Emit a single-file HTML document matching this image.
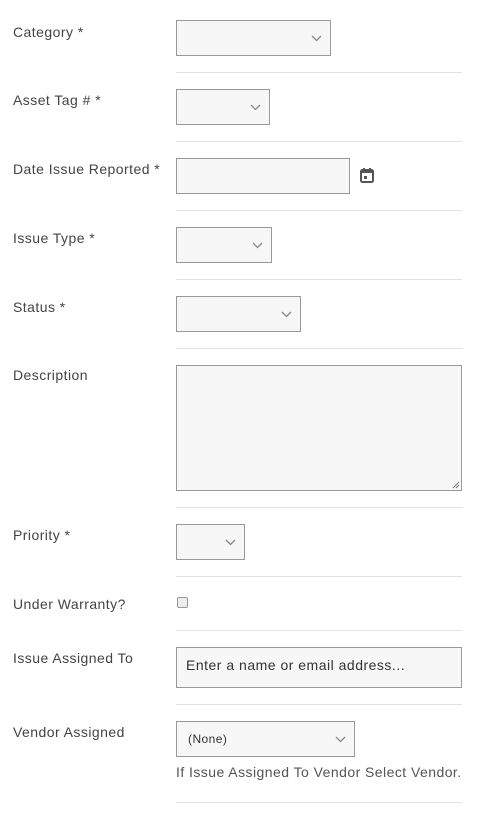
<!DOCTYPE html>
<html><head><style>
body{margin:0;width:486px;height:815px;background:#fff;font-family:"Liberation Sans",sans-serif;position:relative;overflow:hidden;letter-spacing:0.45px}
.l{position:absolute;left:13px;font-size:14px;color:#444;line-height:18px}
.b{position:absolute;left:176px;box-sizing:border-box;border:1px solid #999;background:#f7f7f7}
.hr{position:absolute;left:176px;width:286px;height:1px;background:#e2e2e2}
.c{position:absolute;right:8px;top:50%;margin-top:-3px;width:11px;height:7px}
</style></head><body>
<div class="l" style="top:23px">Category *</div>
<div class="b" style="top:20px;width:155px;height:36px"><svg class="c" viewBox="0 0 11 7"><path d="M1 1l4.5 4.5L10 1" fill="none" stroke="#888" stroke-width="1.3"/></svg></div>
<div class="hr" style="top:72px"></div>
<div class="l" style="top:91px">Asset Tag # *</div>
<div class="b" style="top:89px;width:94px;height:36px"><svg class="c" viewBox="0 0 11 7"><path d="M1 1l4.5 4.5L10 1" fill="none" stroke="#888" stroke-width="1.3"/></svg></div>
<div class="hr" style="top:141px"></div>
<div class="l" style="top:160px">Date Issue Reported *</div>
<div class="b" style="top:158px;width:174px;height:36px"></div>
<svg style="position:absolute;left:360px;top:168px" width="14" height="15" viewBox="0 0 14 15"><rect x="1" y="2" width="12" height="12" rx="1.5" fill="none" stroke="#555" stroke-width="2"/><rect x="1" y="2" width="12" height="3" fill="#555"/><rect x="3" y="0" width="2" height="3" fill="#555"/><rect x="9" y="0" width="2" height="3" fill="#555"/><rect x="4" y="8" width="3" height="3" fill="#555"/></svg>
<div class="hr" style="top:210px"></div>
<div class="l" style="top:229px">Issue Type *</div>
<div class="b" style="top:227px;width:96px;height:36px"><svg class="c" viewBox="0 0 11 7"><path d="M1 1l4.5 4.5L10 1" fill="none" stroke="#888" stroke-width="1.3"/></svg></div>
<div class="hr" style="top:279px"></div>
<div class="l" style="top:298px">Status *</div>
<div class="b" style="top:296px;width:125px;height:36px"><svg class="c" viewBox="0 0 11 7"><path d="M1 1l4.5 4.5L10 1" fill="none" stroke="#888" stroke-width="1.3"/></svg></div>
<div class="hr" style="top:348px"></div>
<div class="l" style="top:366px">Description</div>
<div class="b" style="top:365px;width:286px;height:126px"><svg style="position:absolute;right:1px;bottom:1px" width="8" height="8"><path d="M7 1L1 7M7 4L4 7" stroke="#777"/></svg></div>
<div class="hr" style="top:507px"></div>
<div class="l" style="top:526px">Priority *</div>
<div class="b" style="top:524px;width:69px;height:36px"><svg class="c" viewBox="0 0 11 7"><path d="M1 1l4.5 4.5L10 1" fill="none" stroke="#888" stroke-width="1.3"/></svg></div>
<div class="hr" style="top:576px"></div>
<div class="l" style="top:595px">Under Warranty?</div>
<div style="position:absolute;left:177px;top:597px;width:11px;height:11px;box-sizing:border-box;border:1px solid #999;border-radius:2px;background:#eee"></div>
<div class="hr" style="top:630px"></div>
<div class="l" style="top:649px">Issue Assigned To</div>
<div class="b" style="top:647px;width:286px;height:41px;font-size:14px;color:#333;padding:9px 0 0 9px;letter-spacing:0.5px">Enter a name or email address...</div>
<div class="hr" style="top:704px"></div>
<div class="l" style="top:723px">Vendor Assigned</div>
<div class="b" style="top:721px;width:179px;height:36px;font-size:12px;color:#333;padding:10px 0 0 11px">(None)<svg class="c" viewBox="0 0 11 7"><path d="M1 1l4.5 4.5L10 1" fill="none" stroke="#888" stroke-width="1.3"/></svg></div>
<div style="position:absolute;left:176px;top:764px;font-size:14px;color:#555">If Issue Assigned To Vendor Select Vendor.</div>
<div class="hr" style="top:802px"></div>
</body></html>
